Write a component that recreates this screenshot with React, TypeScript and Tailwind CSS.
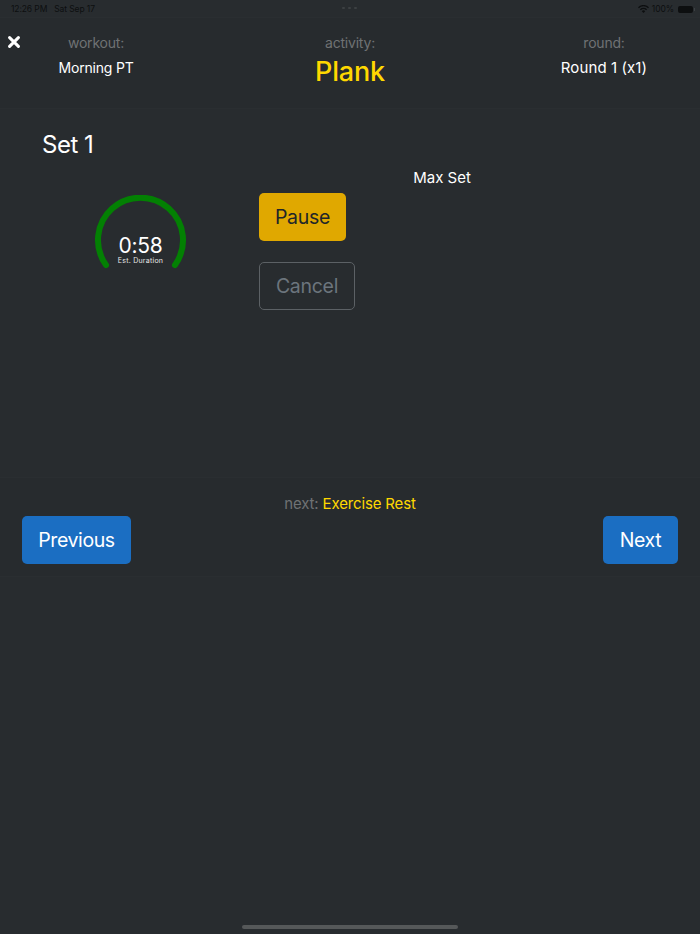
const font = { fontFamily: 'Inter, "Noto Sans", sans-serif' };

function StatusBar() {
  return (
    <div className="h-[17px] flex items-center justify-between pl-[11px] pr-[5px] pt-[1px] text-[8.5px] tracking-[-0.1px] text-[#0d0f10] relative">
      <div className="flex gap-[7px]">
        <span>12:26 PM</span>
        <span>Sat Sep 17</span>
      </div>
      <div className="absolute left-[342px] top-[7px] flex gap-[3px]">
        <span className="w-[3px] h-[2px] rounded-full bg-[#3c4043]" />
        <span className="w-[3px] h-[2px] rounded-full bg-[#3c4043]" />
        <span className="w-[3px] h-[2px] rounded-full bg-[#3c4043]" />
      </div>
      <div className="flex items-center gap-[3px]">
        <svg width="11" height="8" viewBox="0 0 22 16" fill="#0d0f10">
          <path d="M11 16 7.6 12.4a4.8 4.8 0 0 1 6.8 0L11 16Z" />
          <path d="M5.7 10.4 3.8 8.4a10.2 10.2 0 0 1 14.4 0l-1.9 2a7.5 7.5 0 0 0-10.6 0Z" />
          <path d="M1.9 6.4 0 4.4a15.6 15.6 0 0 1 22 0l-1.9 2a12.9 12.9 0 0 0-18.2 0Z" />
        </svg>
        <span>100%</span>
        <span className="w-[15px] h-[7px] rounded-[2px] bg-[#0d0f10] ml-[1px]" />
        <span className="w-[1px] h-[3px] bg-[#3c4043] -ml-[2px]" />
      </div>
    </div>
  );
}

function HeaderCell({ label, children, width }: { label: string; children: React.ReactNode; width: string }) {
  return (
    <div className={`${width} flex flex-col items-center`}>
      <span className="text-[14px] leading-[18px] tracking-[-0.2px] text-[#6f7274]">{label}</span>
      {children}
    </div>
  );
}

function Gauge() {
  return (
    <div className="relative w-[100px] h-[90px]">
      <svg width="100" height="90" viewBox="0 0 100 90" fill="none">
        <path
          d="M16 70 A 42.5 42.5 0 1 1 85 70"
          stroke="#038003"
          strokeWidth="6"
          strokeLinecap="round"
        />
      </svg>
      <div className="absolute left-0 right-0 top-[40px] flex flex-col items-center text-white">
        <span className="text-[21px] leading-[22px] tracking-[-0.3px] pl-[1px]">0:58</span>
        <span className="text-[7px] leading-[8px] text-[#e8e8e8] tracking-[0.25px] pl-[1px]">Est. Duration</span>
      </div>
    </div>
  );
}

export default function App() {
  return (
    <div className="w-[700px] h-[934px] bg-[#282c2f] flex flex-col relative overflow-hidden" style={font}>
      <StatusBar />

      {/* top info */}
      <div className="h-[92px] border-y border-[#2a2e31] bg-[#272b2e] flex pt-[16px] relative">
        <svg className="absolute left-[8px] top-[18px]" width="12" height="12" viewBox="0 0 12 12">
          <path d="M1.6 1.6 10.4 10.4M10.4 1.6 1.6 10.4" stroke="#fff" strokeWidth="3" strokeLinecap="round" />
        </svg>
        <HeaderCell label="workout:" width="w-[192px]">
          <span className="text-[14px] leading-[24px] mt-[4px] tracking-[-0.2px] text-white">Morning PT</span>
        </HeaderCell>
        <HeaderCell label="activity:" width="w-[316px]">
          <span className="text-[27px] leading-[34px] mt-[3px] font-medium tracking-[-0.2px] text-[#ffd800]">Plank</span>
        </HeaderCell>
        <HeaderCell label="round:" width="w-[192px]">
          <span className="text-[15px] leading-[24px] mt-[4px] tracking-[0.1px] text-white">Round 1 (x1)</span>
        </HeaderCell>
      </div>

      {/* current set */}
      <div className="h-[368px] pt-[21px]">
        <div className="pl-[42px] text-[24px] leading-[30px] tracking-[-0.5px] text-white">Set 1</div>
        <div className="flex mt-[5px]">
          <div className="w-[259px] pl-[90px] pt-[30px]">
            <Gauge />
          </div>
          <div className="flex flex-col items-start">
            <div className="w-[366px] text-center text-[15px] leading-[24px] text-white pt-[1px] -mb-[1px]">Max Set</div>
            <button className="mt-[4px] w-[87px] h-[48px] pt-[2px] rounded-[5px] bg-[#e0a800] text-[19.5px] tracking-[-0.3px] text-[#212529]">
              Pause
            </button>
            <button className="mt-[21px] w-[96px] h-[48px] pt-[2px] rounded-[5px] border border-[#5c6165] text-[19.5px] tracking-[-0.3px] text-[#6c757d]">
              Cancel
            </button>
          </div>
        </div>
      </div>

      {/* footer nav */}
      <div className="h-[100px] border-y border-[#2a2e31] bg-[#272b2e] px-[22px] pt-[15px]">
        <div className="text-center text-[15px] leading-[22px] tracking-[-0.15px] text-[#6f7274]">
          next: <span className="text-[#ffd800]">Exercise Rest</span>
        </div>
        <div className="flex justify-between mt-[1px]">
          <button className="w-[109px] h-[48px] pt-[2px] rounded-[5px] bg-[#1b6ec2] text-[19.5px] tracking-[-0.4px] text-white">Previous</button>
          <button className="w-[75px] h-[48px] pt-[2px] rounded-[5px] bg-[#1b6ec2] text-[19.5px] tracking-[-0.4px] text-white">Next</button>
        </div>
      </div>

      {/* home indicator */}
      <div className="absolute left-[242px] top-[925px] w-[216px] h-[4px] rounded-full bg-[#555859]" />
    </div>
  );
}
